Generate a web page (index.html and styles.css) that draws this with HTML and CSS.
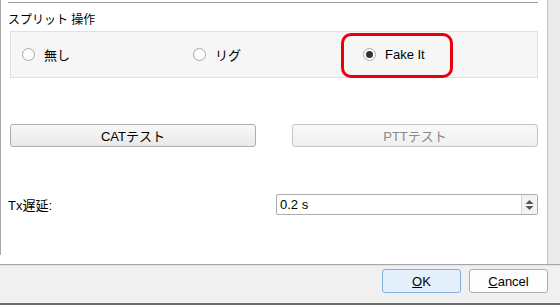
FILE: index.html
```html
<!DOCTYPE html>
<html lang="ja">
  <head>
    <meta charset="UTF-8" />
    <title>設定</title>
    <link rel="stylesheet" href="styles.css">
  </head>
  <body>
    <div class="window">
      <div class="main">
        <div class="panel">
          <div class="frame">
            <div class="rule"></div>
            <div class="group-title">スプリット 操作</div>
            <div class="group">
              <label class="radio"><span class="dot"></span>無し</label>
              <label class="radio"><span class="dot"></span>リグ</label>
              <label class="radio checked"><span class="dot"></span>Fake It
                <span class="highlight"></span>
              </label>
            </div>
            <div class="buttons">
              <button class="btn">CATテスト</button>
              <button class="btn disabled">PTTテスト</button>
            </div>
            <div class="field">
              <span class="field-label">Tx遅延:</span>
              <div class="spin">
                <span class="spin-value">0.2 s</span>
                <span class="spin-arrows">
                  <svg width="9" height="12" viewBox="0 0 9 12">
                    <path d="M4.5 1 L8.5 5 H0.5 Z" fill="#555"/>
                    <path d="M4.5 11 L8.5 7 H0.5 Z" fill="#555"/>
                  </svg>
                </span>
              </div>
            </div>
          </div>
        </div>
        <div class="strip"></div>
      </div>
      <div class="footer">
        <button class="dlg-btn default"><u>O</u>K</button>
        <button class="dlg-btn"><u>C</u>ancel</button>
      </div>
    </div>
  </body>
</html>
```

FILE: styles.css
```css
body {
  margin: 0;
  font-family: "Liberation Sans", "Noto Sans CJK JP", sans-serif;
  font-size: 13px;
  color: #000;
  background-color: #f0f0f0;
}

.window {
  width: 560px;
  height: 305px;
  display: flex;
  flex-direction: column;
}

.main {
  display: flex;
  height: 264px;
}

.panel {
  width: 547px;
  background-color: #fff;
  border-right: 1px solid #c4c4c4;
}

.strip {
  flex: 1;
  background-color: #ebebeb;
}

.frame {
  height: 253px;
  border-left: 1px solid #a8a8a8;
  padding: 2px 9px 0 7px;
}

.rule {
  height: 1px;
  background-color: #a0a0a0;
}

.group-title {
  margin-top: 10px;
  line-height: 14px;
  font-size: 12px;
}

.group {
  margin: 4px 0 0 2px;
  height: 45px;
  background-color: #f6f6f6;
  border: 1px solid #e0e0e0;
  display: grid;
  grid-template-columns: 171px 170px 1fr;
  align-items: center;
  padding-left: 11px;
}

.radio {
  position: relative;
  display: flex;
  align-items: center;
  gap: 9px;
}

.dot {
  width: 11px;
  height: 11px;
  border: 1px solid #a8a8a8;
  border-radius: 50%;
  background-color: #fcfcfc;
  display: flex;
  align-items: center;
  justify-content: center;
}

.checked .dot::after {
  content: "";
  width: 7px;
  height: 7px;
  border-radius: 50%;
  background-color: #333;
}

.highlight {
  position: absolute;
  left: -22px;
  top: -14px;
  width: 106px;
  height: 39px;
  border: 3px solid #e8000b;
  border-radius: 10px;
}

.buttons {
  margin: 46px 0 0 2px;
  display: flex;
  gap: 36px;
}

.btn {
  width: 246px;
  height: 23px;
  font-family: "Liberation Sans", "Noto Sans CJK JP", sans-serif;
  font-size: 13px;
  font-weight: 400;
  border: 1px solid #adadad;
  border-radius: 3px;
  background: linear-gradient(#f8f8f8, #e9e9e9);
  color: #000;
  padding: 0;
}

.btn.disabled {
  color: #8a8a8a;
  border-color: #c4c4c4;
  background: linear-gradient(#f9f9f9, #f0f0f0);
}

.field {
  margin-top: 47px;
  display: flex;
  align-items: center;
  justify-content: space-between;
}

.spin {
  width: 257px;
  height: 19px;
  border: 1px solid #acacac;
  border-radius: 2px;
  display: flex;
  align-items: center;
  justify-content: space-between;
  padding-left: 3px;
}

.spin-arrows {
  width: 15px;
  height: 19px;
  border-left: 1px solid #d4d4d4;
  background-color: #f3f3f3;
  display: flex;
  align-items: center;
  justify-content: center;
}

.footer {
  flex: 1;
  border-top: 1px solid #a6a6a6;
  border-bottom: 2px solid #6e6e6e;
  box-shadow: inset 0 1px 0 #e2e2e2;
  display: flex;
  justify-content: flex-end;
  align-items: flex-start;
  gap: 8px;
  padding: 4px 12px 0 0;
}

.dlg-btn {
  width: 79px;
  height: 24px;
  font-family: "Liberation Sans", sans-serif;
  font-size: 13px;
  font-weight: 400;
  border: 1px solid #adadad;
  border-radius: 3px;
  background-color: #fdfdfd;
  padding: 0;
}

.dlg-btn.default {
  background-color: #e3effa;
  border-color: #7fb0dc;
}
```
